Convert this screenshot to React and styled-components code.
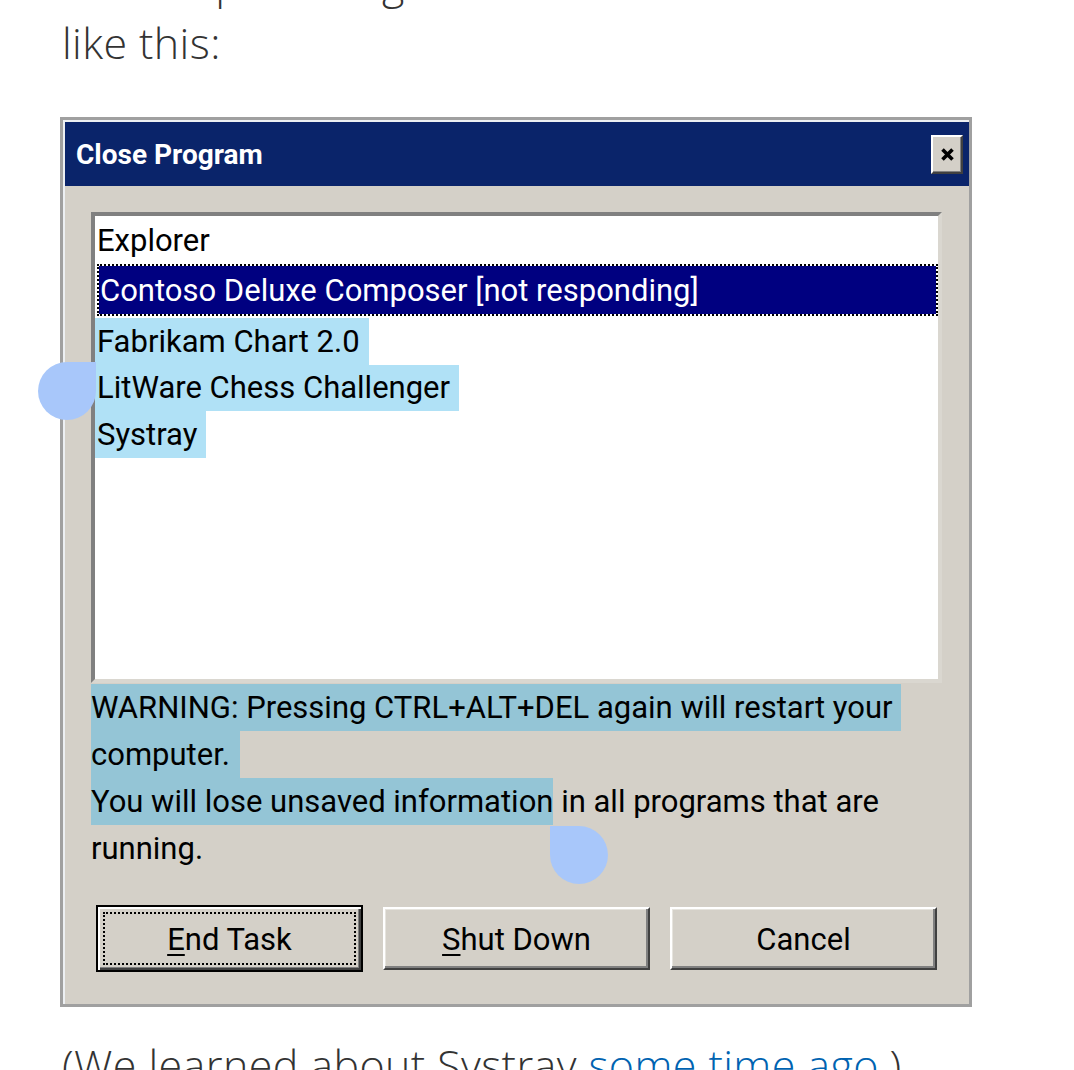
import React from "react";
import styled, { createGlobalStyle } from "styled-components";

const GlobalStyle = createGlobalStyle`
  html, body {
    margin: 0;
    padding: 0;
    background: #fff;
    overflow: hidden;
  }
  body {
    font-family: "Open Sans", "Noto Sans", sans-serif;
  }
`;

const Article = styled.div`
  width: 1074px;
  height: 1070px;
  overflow: hidden;
  padding-left: 60px;
  box-sizing: border-box;
`;

const Prose = styled.p`
  margin: ${(p) => p.$top}px 0 0 2px;
  font-size: 43px;
  line-height: 60px;
  font-weight: 300;
  letter-spacing: 0.4px;
  color: #333;
  white-space: nowrap;
`;

const Link = styled.a`
  color: #0063b1;
  text-decoration: none;
`;

const Window = styled.div`
  position: relative;
  width: 912px;
  margin-top: 44px;
  box-sizing: border-box;
  border: 3px solid #a0a0a0;
  background: #d4d0c8;
  font-family: Roboto, "Liberation Sans", sans-serif;
  color: #000;
`;

const Frame = styled.div`
  border-top: 2px solid #eceff2;
  border-left: 2px solid #eceff2;
`;

const TitleBar = styled.div`
  height: 64px;
  display: flex;
  align-items: center;
  justify-content: space-between;
  padding: 0 6px 0 11px;
  background: #0a246a;
  color: #fff;
  font-size: 28px;
  font-weight: 700;
`;

const CloseButton = styled.div`
  width: 32px;
  height: 39px;
  box-sizing: border-box;
  display: flex;
  align-items: center;
  justify-content: center;
  background: #d4d0c8;
  border: 2px solid;
  border-color: #fff #404040 #404040 #fff;
  box-shadow: inset -1px -1px 0 #808080;
`;

const Body = styled.div`
  padding: 26px 27px 32px 26px;
`;

const ListBox = styled.div`
  height: 471px;
  box-sizing: border-box;
  border: 4px solid;
  border-color: #808080 #dad7d0 #dad7d0 #808080;
  background: #fff;
  font-size: 31px;
`;

const Row = styled.div`
  height: ${(p) => p.$h}px;
  line-height: ${(p) => p.$h}px;
  padding-top: ${(p) => p.$shift || 0}px;
  box-sizing: content-box;
  white-space: nowrap;
`;

const SelectedRow = styled.div`
  height: 52px;
  line-height: 47px;
  padding: 1px 0 0 1px;
  box-sizing: border-box;
  margin: 0 0 2px 2px;
  border: 2px dotted #000;
  background: linear-gradient(#000080, #000080) padding-box, #fff border-box;
  color: #fff;
  white-space: nowrap;
`;

const Mark = styled.span`
  display: inline-block;
  height: 100%;
  padding: 0 ${(p) => p.$pr || 0}px 0 ${(p) => p.$pl || 0}px;
  background: ${(p) => p.$bg || "transparent"};
`;

const Notice = styled.div`
  margin-top: 1px;
  font-size: 31px;
`;

const ButtonRow = styled.div`
  height: 67px;
  margin-top: 33px;
  padding: 0 5px;
  display: flex;
  align-items: center;
  justify-content: space-between;
`;

const Button = styled.div`
  position: relative;
  width: 267px;
  height: ${(p) => (p.$default ? 67 : 63)}px;
  box-sizing: border-box;
  display: flex;
  align-items: center;
  justify-content: center;
  background: #d4d0c8;
  font-size: 31px;
  border: 2px solid;
  border-color: ${(p) =>
    p.$default ? "#000" : "#fff #404040 #404040 #fff"};
  box-shadow: ${(p) =>
    p.$default
      ? "inset 2px 2px 0 #fff, inset -2px -2px 0 #404040, inset -3px -3px 0 #808080"
      : "inset -2px -2px 0 #808080, inset 1px 1px 0 #e6e4de"};

  &::after {
    content: "";
    display: ${(p) => (p.$default ? "block" : "none")};
    position: absolute;
    inset: 5px;
    border: 2px dotted #000;
  }

  span {
    padding-top: 2px;
  }

  u {
    text-decoration-thickness: 2px;
    text-underline-offset: 4px;
  }
`;

const Handle = styled.span`
  position: absolute;
  left: ${(p) => p.$x}px;
  top: ${(p) => p.$y}px;
  width: 58px;
  height: 58px;
  background: #a8c7fa;
  border-radius: ${(p) => (p.$start ? "50% 0 50% 50%" : "0 50% 50% 50%")};
  z-index: 2;
`;

const LIST_BLUE = "#b0e1f6";
const NOTE_BLUE = "#94c5d6";

export default function App() {
  return (
    <>
      <GlobalStyle />
      <Article>
        <Prose $top={-47}>
          The simple dialog box on screen then was something
          <br />
          like this:
        </Prose>

        <Window>
          <Frame>
            <TitleBar>
              <span>Close Program</span>
              <CloseButton>
                <svg width="15" height="15" viewBox="0 0 15 15">
                  <path d="M2.5 2.5 L12.5 12.5 M12.5 2.5 L2.5 12.5" stroke="#000" strokeWidth="3.6" />
                </svg>
              </CloseButton>
            </TitleBar>

            <Body>
              <ListBox>
                <Row $h={46} $shift={2}>
                  <Mark $pl={2}>Explorer</Mark>
                </Row>
                <SelectedRow>Contoso Deluxe Composer [not responding]</SelectedRow>
                <Row $h={47}>
                  <Mark $bg={LIST_BLUE} $pl={2} $pr={9}>Fabrikam Chart 2.0</Mark>
                </Row>
                <Row $h={46}>
                  <Mark $bg={LIST_BLUE} $pl={2} $pr={9}>LitWare Chess Challenger</Mark>
                </Row>
                <Row $h={47}>
                  <Mark $bg={LIST_BLUE} $pl={2} $pr={9}>Systray</Mark>
                </Row>
              </ListBox>

              <Notice>
                <Row $h={47}>
                  <Mark $bg={NOTE_BLUE} $pr={9}>
                    WARNING: Pressing CTRL+ALT+DEL again will restart your
                  </Mark>
                </Row>
                <Row $h={47}>
                  <Mark $bg={NOTE_BLUE} $pr={10}>computer.</Mark>
                </Row>
                <Row $h={47}>
                  <Mark $bg={NOTE_BLUE}>You will lose unsaved information</Mark> in all
                  programs that are
                </Row>
                <Row $h={47}>running.</Row>
              </Notice>

              <ButtonRow>
                <Button $default>
                  <span>
                    <u>E</u>nd Task
                  </span>
                </Button>
                <Button>
                  <span>
                    <u>S</u>hut Down
                  </span>
                </Button>
                <Button>
                  <span>Cancel</span>
                </Button>
              </ButtonRow>
            </Body>
          </Frame>

          <Handle $start $x={-25} $y={242} />
          <Handle $x={487} $y={706} />
        </Window>

        <Prose $top={28}>
          (We learned about Systray <Link href="#">some time ago</Link>.)
        </Prose>
      </Article>
    </>
  );
}
